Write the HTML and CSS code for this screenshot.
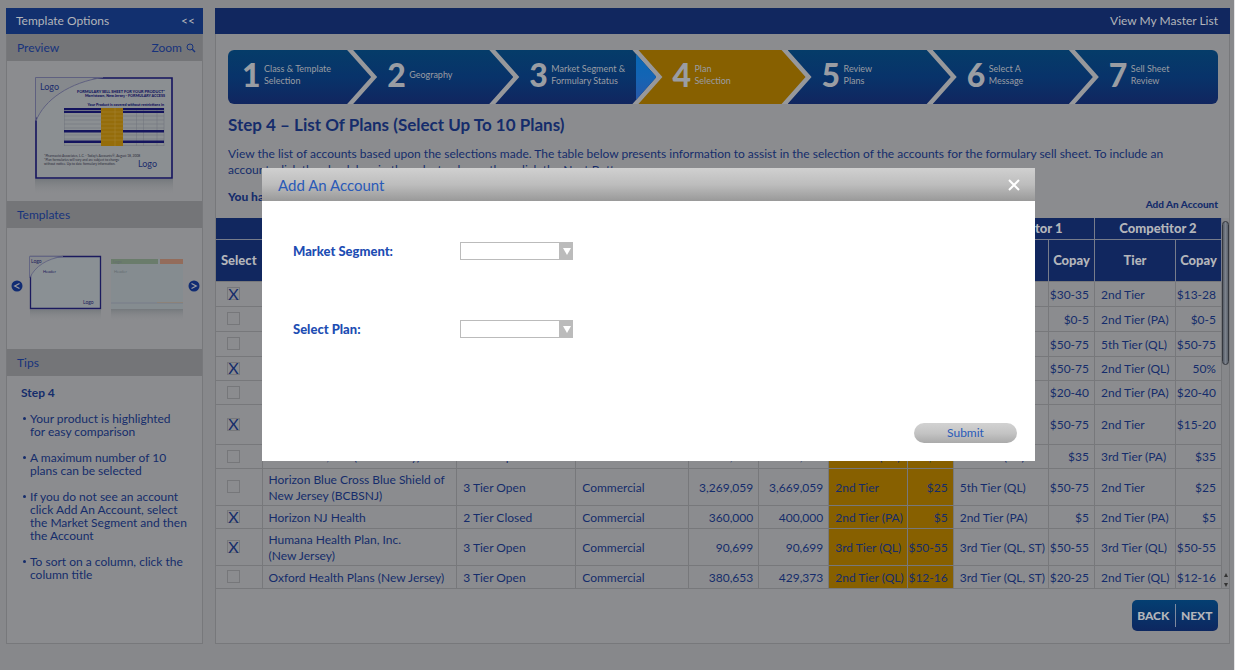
FILE: index.html
```html
<!DOCTYPE html>
<html lang="en">
<head>
<meta charset="utf-8">
<title>Formulary Sell Sheet – Plan Selection</title>
<link rel="stylesheet" href="styles.css">
</head>
<body>
<div class="page">
  <aside class="sidebar">
    <header class="bar"><span>Template Options</span><button type="button" class="plain collapse" aria-label="Collapse">&lt;&lt;</button></header>
    <h2 class="subbar"><span>Preview</span>
      <button type="button" class="plain zoom">Zoom
        <svg width="10" height="10" viewBox="0 0 10 10" fill="none" stroke="currentColor"><circle cx="4" cy="4" r="3"/><path d="M6.3 6.3 9 9" stroke-width="1.4"/></svg>
      </button>
    </h2>
    <svg class="preview" viewBox="7 61 195 140" role="img" aria-label="Sell sheet preview">
      <defs><linearGradient id="fade" x2="0" y2="1"><stop stop-color="#6f7478" stop-opacity=".8"/><stop offset="1" stop-color="#8a8b8e" stop-opacity="0"/></linearGradient></defs>
      <path fill="url(#fade)" d="M35 179h138v16H35z"/>
      <path fill="#8b8f92" stroke="#15135e" stroke-width="1.6" d="M36 78h136v100H36z"/>
      <path fill="#86898d" d="M35 77h67C70 82 44 100 35 121z"/>
      <path fill="none" stroke="#5f6080" d="M35.500 120V77.500H103C70 82 44 100 36 121"/>
      <g fill="#1b2c6c" class="art">
        <text x="40" y="90" font-size="9">Logo</text><text x="138" y="167" font-size="9">Logo</text>
      </g>
      <g fill="#11125c" class="art bold" text-anchor="end">
        <text x="165" y="92.500" font-size="3.900">FORMULARY SELL SHEET FOR YOUR PRODUCT*</text>
        <text x="165" y="97" font-size="3.700">Morristown, New Jersey - FORMULARY ACCESS</text>
        <text x="164" y="105.500" font-size="3.700">Your Product is covered without restrictions in</text>
      </g>
      <g fill="#2b2c3a" class="art" font-size="3.300">
        <text x="44" y="156.500">*Pharmacist Associates, L.C. - Today's Accounts®, August 18, 2008</text>
        <text x="44" y="160.500">*Plan formularies will vary and are subject to change</text>
        <text x="44" y="164.500">without notice. Up to date formulary information.</text>
      </g>
      <path fill="none" stroke="#74777f" stroke-width=".6" d="M64.500 108v38M136.500 108v38M143.500 108v38M157 108v38M164 108v38M64 116h100M64 120h100M64 124h100M64 128h100M64 135h100M64 139h100M64 145.500h100"/>
      <path fill="#14145e" d="M64 108h100v2.200H64zM64 111h100v2H64zM64 130h100v2.500H64zM64 140.500h100v2.500H64z"/>
      <path fill="#956d0b" d="M101 108h22v38h-22z"/>
      <path fill="none" stroke="#a58533" stroke-width=".6" d="M115 108v38M101 112h22M101 116h22M101 120h22M101 124h22M101 128h22M101 132h22M101 136h22M101 140h22"/>
    </svg>
    <h2 class="subbar">Templates</h2>
    <div class="carousel">
      <button type="button" class="plain" aria-label="Previous template"><svg width="12" height="12" viewBox="0 0 12 12"><circle cx="6" cy="6" r="5.500" fill="#112c73"/><path d="M8.500 3.500 3.800 6l4.700 2.500" fill="none" stroke="#9a9ba0" stroke-width="1.300"/></svg></button>
      <svg class="thumbs" viewBox="26 250 158 72" role="img" aria-label="Available templates">
        <path fill="url(#fade)" d="M29 310h71v11H29zM110 309h72v11h-72z"/>
        <path fill="#8a9094" stroke="#1b1a5e" stroke-width="1.300" d="M29.500 256.500h70v52h-70z"/>
        <path fill="#878a8e" d="M28 255.500h34c-16 3-28 11-33 22h-1z"/>
        <path fill="none" stroke="#5c5d80" stroke-width=".8" d="M28.500 278v-21.500H62c-16 2-28 10-33 21"/>
        <path fill="#858c90" d="M110 259h72v50h-72z"/>
        <path fill="#6a7c6b" d="M110 259h47v5h-47z"/><path fill="#936c5b" d="M159 259h23v5h-23z"/>
        <path stroke="#747989" stroke-width=".8" d="M110 303h72"/>
        <path stroke="#8f8274" stroke-width=".8" d="M156 302.500h26"/>
        <g class="art" fill="#20205c"><text x="30" y="263" font-size="5">Logo</text><text x="42" y="272.500" font-size="4">Header</text><text x="82" y="303.500" font-size="5">Logo</text></g>
        <g class="art" fill="#646c70"><text x="112" y="263" font-size="4">Logo</text><text x="113" y="272.500" font-size="4">Header</text></g>
      </svg>
      <button type="button" class="plain" aria-label="Next template"><svg width="12" height="12" viewBox="0 0 12 12"><circle cx="6" cy="6" r="5.500" fill="#112c73"/><path d="M3.500 3.500 8.200 6 3.500 8.500" fill="none" stroke="#9a9ba0" stroke-width="1.300"/></svg></button>
    </div>
    <h2 class="subbar">Tips</h2>
    <div class="tips">
      <h3>Step 4</h3>
      <ul>
        <li>Your product is highlighted<br>for easy comparison</li>
        <li>A maximum number of 10<br>plans can be selected</li>
        <li>If you do not see an account<br>click Add An Account, select<br>the Market Segment and then<br>the Account</li>
        <li>To sort on a column, click the<br>column title</li>
      </ul>
    </div>
  </aside>

  <main class="main">
    <header class="bar bar-main"><a href="#master">View My Master List</a></header>
    <ol class="steps">
      <li class="step s1"><b>1</b><span>Class &amp; Template<br>Selection</span></li>
      <li class="step s2"><b>2</b><span>Geography</span></li>
      <li class="step s3"><b>3</b><span>Market Segment &amp;<br>Formulary Status</span></li>
      <li class="step s4" aria-current="step"><b>4</b><span>Plan<br>Selection</span></li>
      <li class="step s5"><b>5</b><span>Review<br>Plans</span></li>
      <li class="step s6"><b>6</b><span>Select A<br>Message</span></li>
      <li class="step s7"><b>7</b><span>Sell Sheet<br>Review</span></li>
    </ol>
    <section class="intro">
      <h1>Step 4 – List Of Plans (Select Up To 10 Plans)</h1>
      <p>View the list of accounts based upon the selections made. The table below presents information to assist in the selection of the accounts for the formulary sell sheet. To include an<br>account, click the check box in the select column, then click the Next Button.</p>
      <div class="status"><strong>You have</strong><a href="#add">Add An Account</a></div>
    </section>
    <div class="grid">
      <table>
        <colgroup><col class="c-select"><col><col class="c-type"><col class="c-segment"><col class="c-num"><col class="c-num"><col class="c-tier"><col class="c-copay"><col class="c-tier-wide"><col class="c-copay"><col class="c-tier-last"><col class="c-copay"></colgroup>
        <thead>
          <tr><th colspan="6"></th><th colspan="2"></th><th colspan="2">Competitor 1</th><th colspan="2">Competitor 2</th></tr>
          <tr class="cols"><th>Select</th><th></th><th></th><th></th><th></th><th></th><th>Tier</th><th>Copay</th><th>Tier</th><th>Copay</th><th>Tier</th><th>Copay</th></tr>
        </thead>
        <tbody>
          <tr class="roomy"><td><input type="checkbox" aria-label="Select plan 1" checked></td><td></td><td></td><td></td><td></td><td></td><td></td><td></td><td></td><td>$30-35</td><td>2nd Tier</td><td>$13-28</td></tr>
          <tr class="roomy"><td><input type="checkbox" aria-label="Select plan 2"></td><td></td><td></td><td></td><td></td><td></td><td></td><td></td><td></td><td>$0-5</td><td>2nd Tier (PA)</td><td>$0-5</td></tr>
          <tr class="roomy"><td><input type="checkbox" aria-label="Select plan 3"></td><td></td><td></td><td></td><td></td><td></td><td></td><td></td><td></td><td>$50-75</td><td>5th Tier (QL)</td><td>$50-75</td></tr>
          <tr><td><input type="checkbox" aria-label="Select plan 4" checked></td><td></td><td></td><td></td><td></td><td></td><td></td><td></td><td></td><td>$50-75</td><td>2nd Tier (QL)</td><td>50%</td></tr>
          <tr><td><input type="checkbox" aria-label="Select plan 5"></td><td></td><td></td><td></td><td></td><td></td><td></td><td></td><td></td><td>$20-40</td><td>2nd Tier (PA)</td><td>$20-40</td></tr>
          <tr class="tall"><td><input type="checkbox" aria-label="Select plan 6" checked></td><td></td><td></td><td></td><td></td><td></td><td></td><td></td><td></td><td>$50-75</td><td>2nd Tier</td><td>$15-20</td></tr>
          <tr><td><input type="checkbox" aria-label="Select Health Net"></td><td>Health Net, Inc. (New Jersey)</td><td>3 Tier Open</td><td>Commercial</td><td>232,644</td><td>266,538</td><td>3rd Tier (PA)</td><td>$35</td><td>3rd Tier (PA)</td><td>$35</td><td>3rd Tier (PA)</td><td>$35</td></tr>
          <tr><td><input type="checkbox" aria-label="Select Horizon Blue Cross Blue Shield"></td><td>Horizon Blue Cross Blue Shield of<br>New Jersey (BCBSNJ)</td><td>3 Tier Open</td><td>Commercial</td><td>3,269,059</td><td>3,669,059</td><td>2nd Tier</td><td>$25</td><td>5th Tier (QL)</td><td>$50-75</td><td>2nd Tier</td><td>$25</td></tr>
          <tr class="snug"><td><input type="checkbox" aria-label="Select Horizon NJ Health" checked></td><td>Horizon NJ Health</td><td>2 Tier Closed</td><td>Commercial</td><td>360,000</td><td>400,000</td><td>2nd Tier (PA)</td><td>$5</td><td>2nd Tier (PA)</td><td>$5</td><td>2nd Tier (PA)</td><td>$5</td></tr>
          <tr><td><input type="checkbox" aria-label="Select Humana Health Plan" checked></td><td>Humana Health Plan, Inc.<br>(New Jersey)</td><td>3 Tier Open</td><td>Commercial</td><td>90,699</td><td>90,699</td><td>3rd Tier (QL)</td><td>$50-55</td><td>3rd Tier (QL, ST)</td><td>$50-55</td><td>3rd Tier (QL)</td><td>$50-55</td></tr>
          <tr class="snug"><td><input type="checkbox" aria-label="Select Oxford Health Plans"></td><td>Oxford Health Plans (New Jersey)</td><td>3 Tier Open</td><td>Commercial</td><td>380,653</td><td>429,373</td><td>2nd Tier (QL)</td><td>$12-16</td><td>3rd Tier (QL, ST)</td><td>$20-25</td><td>2nd Tier (QL)</td><td>$12-16</td></tr>
        </tbody>
      </table>
      <div class="scrollbar" aria-hidden="true"><i class="thumb"></i>
        <svg width="6" height="16" viewBox="0 0 6 16"><path fill="#333" d="M3 1 5 5H1zM3 15 1 11h4z"/></svg>
      </div>
    </div>
    <nav class="pager"><button type="button">BACK</button><button type="button">NEXT</button></nav>
  </main>
</div>

<div class="overlay">
  <form class="dialog" role="dialog" aria-labelledby="dialog-title">
    <header><h2 id="dialog-title">Add An Account</h2>
      <button type="button" class="plain" aria-label="Close"><svg width="12" height="12" viewBox="0 0 12 12"><path d="m1 1 10 10M11 1 1 11" stroke="#fff" stroke-width="2"/></svg></button>
    </header>
    <div class="fields">
      <label for="segment">Market Segment:</label>
      <span class="picker"><select id="segment"><option></option></select></span>
      <label for="plan">Select Plan:</label>
      <span class="picker"><select id="plan"><option></option></select></span>
    </div>
    <footer><button type="submit">Submit</button></footer>
  </form>
</div>
</body>
</html>
```
FILE: styles.css
```css
* { box-sizing: border-box; }

:root {
  --navy: #11275f;
  --ink: #152c6b;
  --line: #77787b;
  --panel: #8b8c8f;
  --light: #b3b5ba;
}

html { background: #87888b; }

body {
  margin: 0;
  min-height: 100vh;
  border-right: 1px solid #e4e4e6;
  background: #87888b;
  color: var(--ink);
  font: 12px/16px Lato, sans-serif;
}

h1, h2, h3, p, ul, ol { margin: 0; padding: 0; }
a { color: inherit; text-decoration: none; }
button { font: inherit; color: inherit; }
.plain { padding: 0; border: 0; background: none; }
svg { display: block; }
.art { font-family: Lato, sans-serif; }
.bold { font-weight: 900; }

.page { display: flex; gap: 12px; padding: 8px 4px 27px 6px; }
.sidebar, .main { border: 1px solid var(--line); border-top: 0; background: var(--panel); }
.sidebar { flex: 0 0 197px; }
.main { flex: 1; min-width: 0; }

.bar {
  display: flex;
  justify-content: space-between;
  align-items: center;
  height: 26px;
  margin: 0 -1px;
  padding: 0 8px 0 10px;
  background: var(--navy);
  color: var(--light);
}
.sidebar .bar { background: #12306f; }
.bar-main { justify-content: flex-end; padding-right: 12px; }

.subbar {
  display: flex;
  justify-content: space-between;
  align-items: center;
  height: 27px;
  padding: 0 6px 0 10px;
  background: #747578;
  font-size: 12px;
  font-weight: 400;
  color: #17337c;
}
.zoom { display: flex; align-items: center; gap: 4px; }
.preview { width: 100%; }

.carousel { display: flex; align-items: center; justify-content: space-between; height: 121px; padding: 0 2px 6px 4px; }
.thumbs { width: 158px; }

.tips { padding: 10px 8px 0 14px; line-height: 13px; }
.tips h3 { font-size: 12px; font-weight: 700; }
.tips ul { list-style: none; }
.tips li { position: relative; margin-top: 13px; padding-left: 9px; }
.tips li::before { content: ""; position: absolute; left: 2px; top: 5px; width: 3px; height: 3px; border-radius: 50%; background: var(--ink); }

.steps {
  display: flex;
  height: 54px;
  margin: 16px 11px 0 12px;
  border-radius: 6px;
  overflow: hidden;
  list-style: none;
  background: #97989b;
}
.step {
  position: relative;
  display: flex;
  align-items: center;
  margin-left: -18px;
  padding: 0 0 4px 34px;
  background: linear-gradient(#053c69, #08336a 50%, #11265f);
  clip-path: polygon(0 0, calc(100% - 24px) 0, 100% 50%, calc(100% - 24px) 100%, 0 100%, 24px 50%);
  color: #9a9da3;
  font-size: 9px;
  line-height: 12px;
  white-space: nowrap;
}
.step b { flex: 0 0 22px; font-size: 32px; font-weight: 900; line-height: 40px; }
.s1 { flex: 1 1 143px; margin-left: 0; padding-left: 14px; clip-path: polygon(0 0, calc(100% - 24px) 0, 100% 50%, calc(100% - 24px) 100%, 0 100%); }
.s2 { flex: 1 1 160px; }
.s3 { flex: 1 1 161px; }
.s4 { flex: 1 1 167px; background: #876000; }
.s5 { flex: 1 1 163px; }
.s6 { flex: 1 1 160px; }
.s7 { flex: 1 1 143px; clip-path: polygon(0 0, 100% 0, 100% 100%, 0 100%, 24px 50%); }
.s3::after { content: ""; position: absolute; inset: 0 0 0 auto; width: 20px; background: linear-gradient(#0668b4, #1464b4 50%, #2c57a8); }

.intro { padding: 12px 11px 0 12px; }
.intro h1 { font-size: 17px; line-height: 18px; }
.intro p { margin-top: 12px; white-space: nowrap; }
.status { display: flex; justify-content: space-between; align-items: center; height: 20px; margin-top: 9px; }
.status strong { font-size: 12px; font-weight: 900; }
.status a { padding-top: 13px; font-size: 10px; font-weight: 900; }

.grid { display: flex; margin-top: 11px; border-bottom: 1px solid var(--line); }
table { flex: 1; min-width: 0; table-layout: fixed; border-collapse: collapse; }
.c-select { width: 46px; }
.c-type { width: 119px; }
.c-segment { width: 113px; }
.c-num { width: 70px; }
.c-tier { width: 78px; }
.c-tier-wide { width: 95px; }
.c-tier-last { width: 81px; }
.c-copay { width: 46px; }
th { height: 21px; padding: 0; border: 1px solid #777c8b; border-top: 0; background: var(--navy); color: var(--light); font-size: 13px; font-weight: 900; line-height: 16px; }
th:first-child { border-left: 0; }
.cols th { height: 42px; border-bottom: 0; }
td { height: 24px; padding: 3px 3px 1px 6px; border: 1px solid var(--line); white-space: nowrap; }
td:first-child { padding: 2px 0 2px 11px; border-left: 0; }
tbody tr:last-child td { border-bottom: 0; }
td:nth-child(5), td:nth-child(6), td:nth-child(8), td:nth-child(10), td:nth-child(12) { text-align: right; padding: 3px 5px 1px 0; }
td:nth-child(7), td:nth-child(8) { background: #876000; }
.roomy td { height: 25px; }
.snug td { height: 23px; }
.tall td { height: 40px; }

input[type="checkbox"] {
  display: flex;
  align-items: center;
  justify-content: center;
  appearance: none;
  width: 13px;
  height: 13px;
  margin: 0;
  border: 1px solid #76777a;
}
input[type="checkbox"]:checked::before { content: "X"; color: var(--ink); font: 16px/12px Lato, sans-serif; }

.scrollbar { display: flex; flex-direction: column; justify-content: space-between; align-items: center; flex: 0 0 7px; padding-top: 3px; background: #86878a; }
.thumb { width: 7px; height: 144px; border: 1px solid #35383f; border-radius: 4px; background: linear-gradient(90deg, #565c66, #7c828c, #5c626b); }

.pager { display: flex; width: 86px; margin: 11px 11px 12px auto; padding: 4px 0; border-radius: 5px; background: linear-gradient(#043f72, #0d2760); color: var(--light); }
.pager button { flex: 1; height: 23px; padding: 0; border: 0; background: none; font-size: 12px; font-weight: 900; }
.pager button + button { border-left: 1px solid #7f8a9f; }

.overlay { position: absolute; inset: 0; padding: 168px 200px 0 262px; }
.dialog { background: #fff; color: #1d4db3; }
.dialog header { display: flex; justify-content: space-between; align-items: center; height: 33px; padding: 0 15px 0 16px; background: linear-gradient(#d0d0d0, #bdbdbd 50%, #999); }
.dialog h2 { font-size: 15px; font-weight: 400; color: #2a5ab8; }
.fields { display: grid; grid-template-columns: 167px 113px; row-gap: 60px; align-items: center; padding: 41px 31px 0; }
.fields label { font-size: 13px; font-weight: 900; }
.picker { position: relative; height: 18px; }
.picker select { display: block; width: 100%; height: 18px; appearance: none; border: 1px solid #bbb; border-radius: 0; background: linear-gradient(90deg, #fff 98px, #bbb 98px); }
.picker::after { content: ""; position: absolute; right: 2px; top: 6px; border: 4px solid transparent; border-top: 7px solid #fff; border-bottom: 0; pointer-events: none; }
.dialog footer { display: flex; justify-content: flex-end; padding: 85px 18px 18px; }
.dialog footer button { width: 103px; height: 20px; padding: 0; border: 0; border-radius: 10px; background: linear-gradient(#d2d2d2, #c4c4c4 50%, #aaa); color: #2a5ab8; }
```
